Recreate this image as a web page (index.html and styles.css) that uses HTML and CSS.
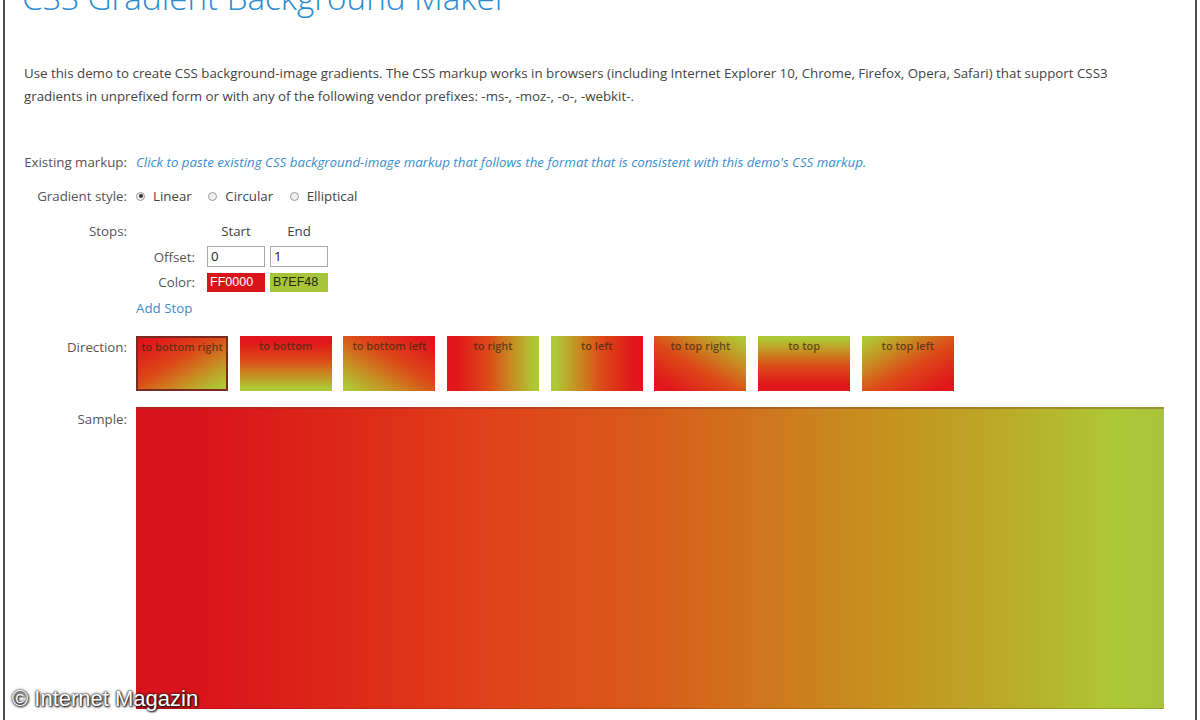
FILE: index.html
```html
<!DOCTYPE html>
<html lang="en">
<head>
<meta charset="utf-8">
<title>CSS Gradient Background Maker</title>
<link rel="stylesheet" href="styles.css">
</head>
<body>
<div class="frame">
  <h1 class="title">CSS Gradient Background Maker</h1>
  <p class="intro">Use this demo to create CSS background-image gradients. The CSS markup works in browsers (including Internet Explorer 10, Chrome, Firefox, Opera, Safari) that support CSS3 gradients in unprefixed form or with any of the following vendor prefixes: -ms-, -moz-, -o-, -webkit-.</p>

  <div class="row row-markup">
    <div class="label">Existing markup:</div>
    <div class="value"><a class="paste-link">Click to paste existing CSS background-image markup that follows the format that is consistent with this demo's CSS markup.</a></div>
  </div>

  <div class="row row-style">
    <div class="label">Gradient style:</div>
    <div class="value radios">
      <span class="radio-item"><span class="radio checked"></span>Linear</span>
      <span class="radio-item"><span class="radio"></span>Circular</span>
      <span class="radio-item"><span class="radio"></span>Elliptical</span>
    </div>
  </div>

  <div class="row row-stops">
    <div class="label">Stops:</div>
    <div class="value">
      <div class="stops">
        <span class="stop-head"></span><span class="stop-head">Start</span><span class="stop-head">End</span>
        <span class="stop-label">Offset:</span><span class="offset-box">0</span><span class="offset-box">1</span>
        <span class="stop-label">Color:</span><span class="color-box color-red">FF0000</span><span class="color-box color-green">B7EF48</span>
      </div>
      <a class="add-stop">Add Stop</a>
    </div>
  </div>

  <div class="row row-direction">
    <div class="label">Direction:</div>
    <div class="value thumbs">
      <div class="thumb selected d-br">to bottom right</div>
      <div class="thumb d-b">to bottom</div>
      <div class="thumb d-bl">to bottom left</div>
      <div class="thumb d-r">to right</div>
      <div class="thumb d-l">to left</div>
      <div class="thumb d-tr">to top right</div>
      <div class="thumb d-t">to top</div>
      <div class="thumb d-tl">to top left</div>
    </div>
  </div>

  <div class="row row-sample">
    <div class="label">Sample:</div>
    <div class="value"><div class="sample"></div></div>
  </div>

  <div class="watermark">© Internet Magazin</div>
</div>
</body>
</html>
```

FILE: styles.css
```css
html, body {
  margin: 0;
  padding: 0;
  background: #ffffff;
  overflow: hidden;
}

body {
  padding: 0 3px;
  font-family: "Open Sans", "Noto Sans", sans-serif;
  color: #444;
}

.frame {
  display: flow-root;
  position: relative;
  height: 720px;
  border-left: 2px solid #4d4d4d;
  border-right: 2px solid #4d4d4d;
  padding-left: 19px;
  box-sizing: border-box;
  overflow: hidden;
}

.title {
  margin: -22px 0 0 -2px;
  font-size: 33.2px;
  line-height: 40px;
  font-weight: 300;
  color: #2a8bd0;
  white-space: nowrap;
}

.intro {
  margin: 44px 0 0 0;
  width: 1100px;
  font-size: 13.3px;
  line-height: 23px;
  color: #444;
}

.row {
  display: flex;
  align-items: flex-start;
}

.label {
  width: 103px;
  flex: none;
  text-align: right;
  margin-right: 9px;
  font-size: 13.3px;
  line-height: 20px;
  color: #555;
  white-space: nowrap;
}

.value {
  font-size: 13.3px;
  line-height: 20px;
}

.row-markup { margin-top: 44px; }

.paste-link {
  font-style: italic;
  color: #3a8fcf;
  font-size: 13.3px;
  white-space: nowrap;
}

.row-style { margin-top: 14px; }

.radios {
  display: flex;
  gap: 16.5px;
  color: #444;
}

.radio-item {
  display: inline-flex;
  align-items: center;
}

.radio {
  width: 9px;
  height: 9px;
  border: 1px solid #9a9a9a;
  border-radius: 50%;
  margin-right: 8px;
  background: #f0f0f0;
  box-sizing: border-box;
  position: relative;
}

.radio.checked::after {
  content: "";
  position: absolute;
  left: 1.5px;
  top: 1.5px;
  width: 4px;
  height: 4px;
  border-radius: 50%;
  background: #333;
}

.row-stops { margin-top: 15px; }

.stops {
  display: grid;
  grid-template-columns: 66px 58px 58px;
  grid-template-rows: 20px 21px 20px;
  column-gap: 5px;
  row-gap: 5px;
  align-items: center;
}

.stop-head {
  text-align: center;
  color: #444;
}

.stop-label {
  text-align: right;
  color: #555;
  padding-right: 7px;
}

.offset-box {
  height: 21px;
  border: 1px solid #a9a9a9;
  box-sizing: border-box;
  padding-left: 3px;
  line-height: 19px;
  color: #222;
  background: #fff;
}

.color-box {
  height: 19px;
  line-height: 19px;
  padding-left: 3px;
  box-sizing: border-box;
  font-family: "Liberation Sans", Arial, sans-serif;
  font-size: 12.5px;
}

.color-red {
  background: #d9151c;
  color: #ffffff;
}

.color-green {
  background: #a8c43a;
  color: #1f2a10;
}

.add-stop {
  display: block;
  margin-top: 6px;
  color: #3a8fcf;
}

.row-direction { margin-top: 18px; }

.row-direction .label { margin-top: 1px; }

.thumbs {
  display: flex;
  gap: 11.7px;
}

.thumb {
  width: 92px;
  height: 55px;
  box-sizing: border-box;
  text-align: center;
  font-size: 11px;
  font-weight: 600;
  line-height: 19px;
  color: rgba(60, 40, 20, 0.75);
  white-space: nowrap;
  overflow: hidden;
}

.thumb.selected {
  border: 2px solid #7a2a20;
  line-height: 17px;
}

.d-br { background: linear-gradient(to bottom right, #e0161b 10%, #dc4a18 45%, #c88b22 70%, #aec935 95%); }
.d-b  { background: linear-gradient(to bottom, #e0161b 10%, #dc4a18 45%, #c88b22 70%, #aec935 95%); }
.d-bl { background: linear-gradient(to bottom left, #e0161b 10%, #dc4a18 45%, #c88b22 70%, #aec935 95%); }
.d-r  { background: linear-gradient(to right, #e0161b 10%, #dc4a18 45%, #c88b22 70%, #aec935 95%); }
.d-l  { background: linear-gradient(to left, #e0161b 10%, #dc4a18 45%, #c88b22 70%, #aec935 95%); }
.d-tr { background: linear-gradient(to top right, #e0161b 10%, #dc4a18 45%, #c88b22 70%, #aec935 95%); }
.d-t  { background: linear-gradient(to top, #e0161b 10%, #dc4a18 45%, #c88b22 70%, #aec935 95%); }
.d-tl { background: linear-gradient(to top left, #e0161b 10%, #dc4a18 45%, #c88b22 70%, #aec935 95%); }

.row-sample { margin-top: 16px; }

.row-sample .label { margin-top: 2px; }

.sample {
  width: 1028px;
  height: 302px;
  box-sizing: border-box;
  border-top: 2px solid rgba(120, 60, 40, 0.35);
  border-bottom: 1px solid rgba(0, 0, 0, 0.15);
  background: linear-gradient(to right, #d9131b 6%, #dd2b18 22%, #e0431a 35%, #d85c1a 50%, #cd7b1e 63%, #c5941f 74%, #b9ae2a 86%, #adc734 95%, #a9c43c 100%);
}

.watermark {
  position: absolute;
  left: 7px;
  bottom: 9px;
  font-family: "Liberation Sans", Arial, sans-serif;
  font-size: 22px;
  line-height: 25px;
  color: #ffffff;
  text-shadow: 0 0 2px #222, 0 0 3px #222, 1px 1px 2px #000;
}
```
